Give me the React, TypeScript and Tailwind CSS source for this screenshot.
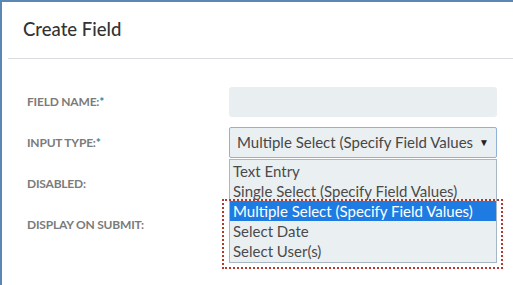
import React from 'react';

const options = [
  'Text Entry',
  'Single Select (Specify Field Values)',
  'Multiple Select (Specify Field Values)',
  'Select Date',
  'Select User(s)',
];

const Label: React.FC<{ text: string; required?: boolean }> = ({ text, required }) => (
  <span className="text-[12px] font-bold text-[#7b7b7b] tracking-[-0.2px]">
    {text}
    {required && <span className="text-[#3d7f95]">*</span>}
  </span>
);

export default function App() {
  const selected = 2;

  return (
    <div className="w-[513px] h-[285px] overflow-hidden bg-white border-t-2 border-l-2 border-[#5b87b6] font-['Lato',sans-serif]">
      {/* Header */}
      <div className="ml-[6px] h-[57px] border-b border-[#d9dcdf] flex items-center pl-[15px]">
        <h1 className="text-[18.5px] text-[#333] font-medium">Create Field</h1>
      </div>

      {/* Form */}
      <div className="pl-[25px] pt-[28px] flex flex-col gap-[10px]">
        <div className="grid grid-cols-[202px_268px] items-center h-[30px]">
          <Label text="FIELD NAME:" required />
          <div className="h-[30px] rounded-[3px] bg-[#e9eef1]" />
        </div>

        <div className="grid grid-cols-[202px_268px] items-center h-[31px]">
          <Label text="INPUT TYPE:" required />
          <div className="relative">
            <div className="h-[31px] rounded-[2px] border border-[#8fb2d8] bg-[#eaeff2] flex items-center pl-[7px] pr-[7px]">
              <span className="flex-1 whitespace-nowrap text-[15px] text-[#474747]">
                Multiple Select (Specify Field Values
              </span>
              <span className="text-[10px] text-[#222]">▼</span>
            </div>

            {/* Open dropdown list */}
            <div className="absolute left-0 right-0 top-[32px] z-10 border border-[#a8b7c4] bg-[#eaeff2] py-[1px]">
              {options.map((o, i) => (
                <div
                  key={o}
                  className={`h-[20px] leading-[20px] pl-[3px] text-[15px] whitespace-nowrap ${
                    i === selected ? 'bg-[#1e7be2] text-white' : 'text-[#4a4a4a]'
                  }`}
                >
                  {o}
                </div>
              ))}
            </div>

            {/* Annotation box */}
            <div className="absolute left-[-7px] top-[72px] w-[281px] h-[70px] z-20 border-2 border-dotted border-[#b8382e] pointer-events-none" />
          </div>
        </div>

        <div className="grid grid-cols-[202px_268px] items-center h-[31px]">
          <Label text="DISABLED:" />
          <div />
        </div>

        <div className="grid grid-cols-[202px_268px] items-center h-[31px]">
          <Label text="DISPLAY ON SUBMIT:" />
          <div />
        </div>
      </div>
    </div>
  );
}
